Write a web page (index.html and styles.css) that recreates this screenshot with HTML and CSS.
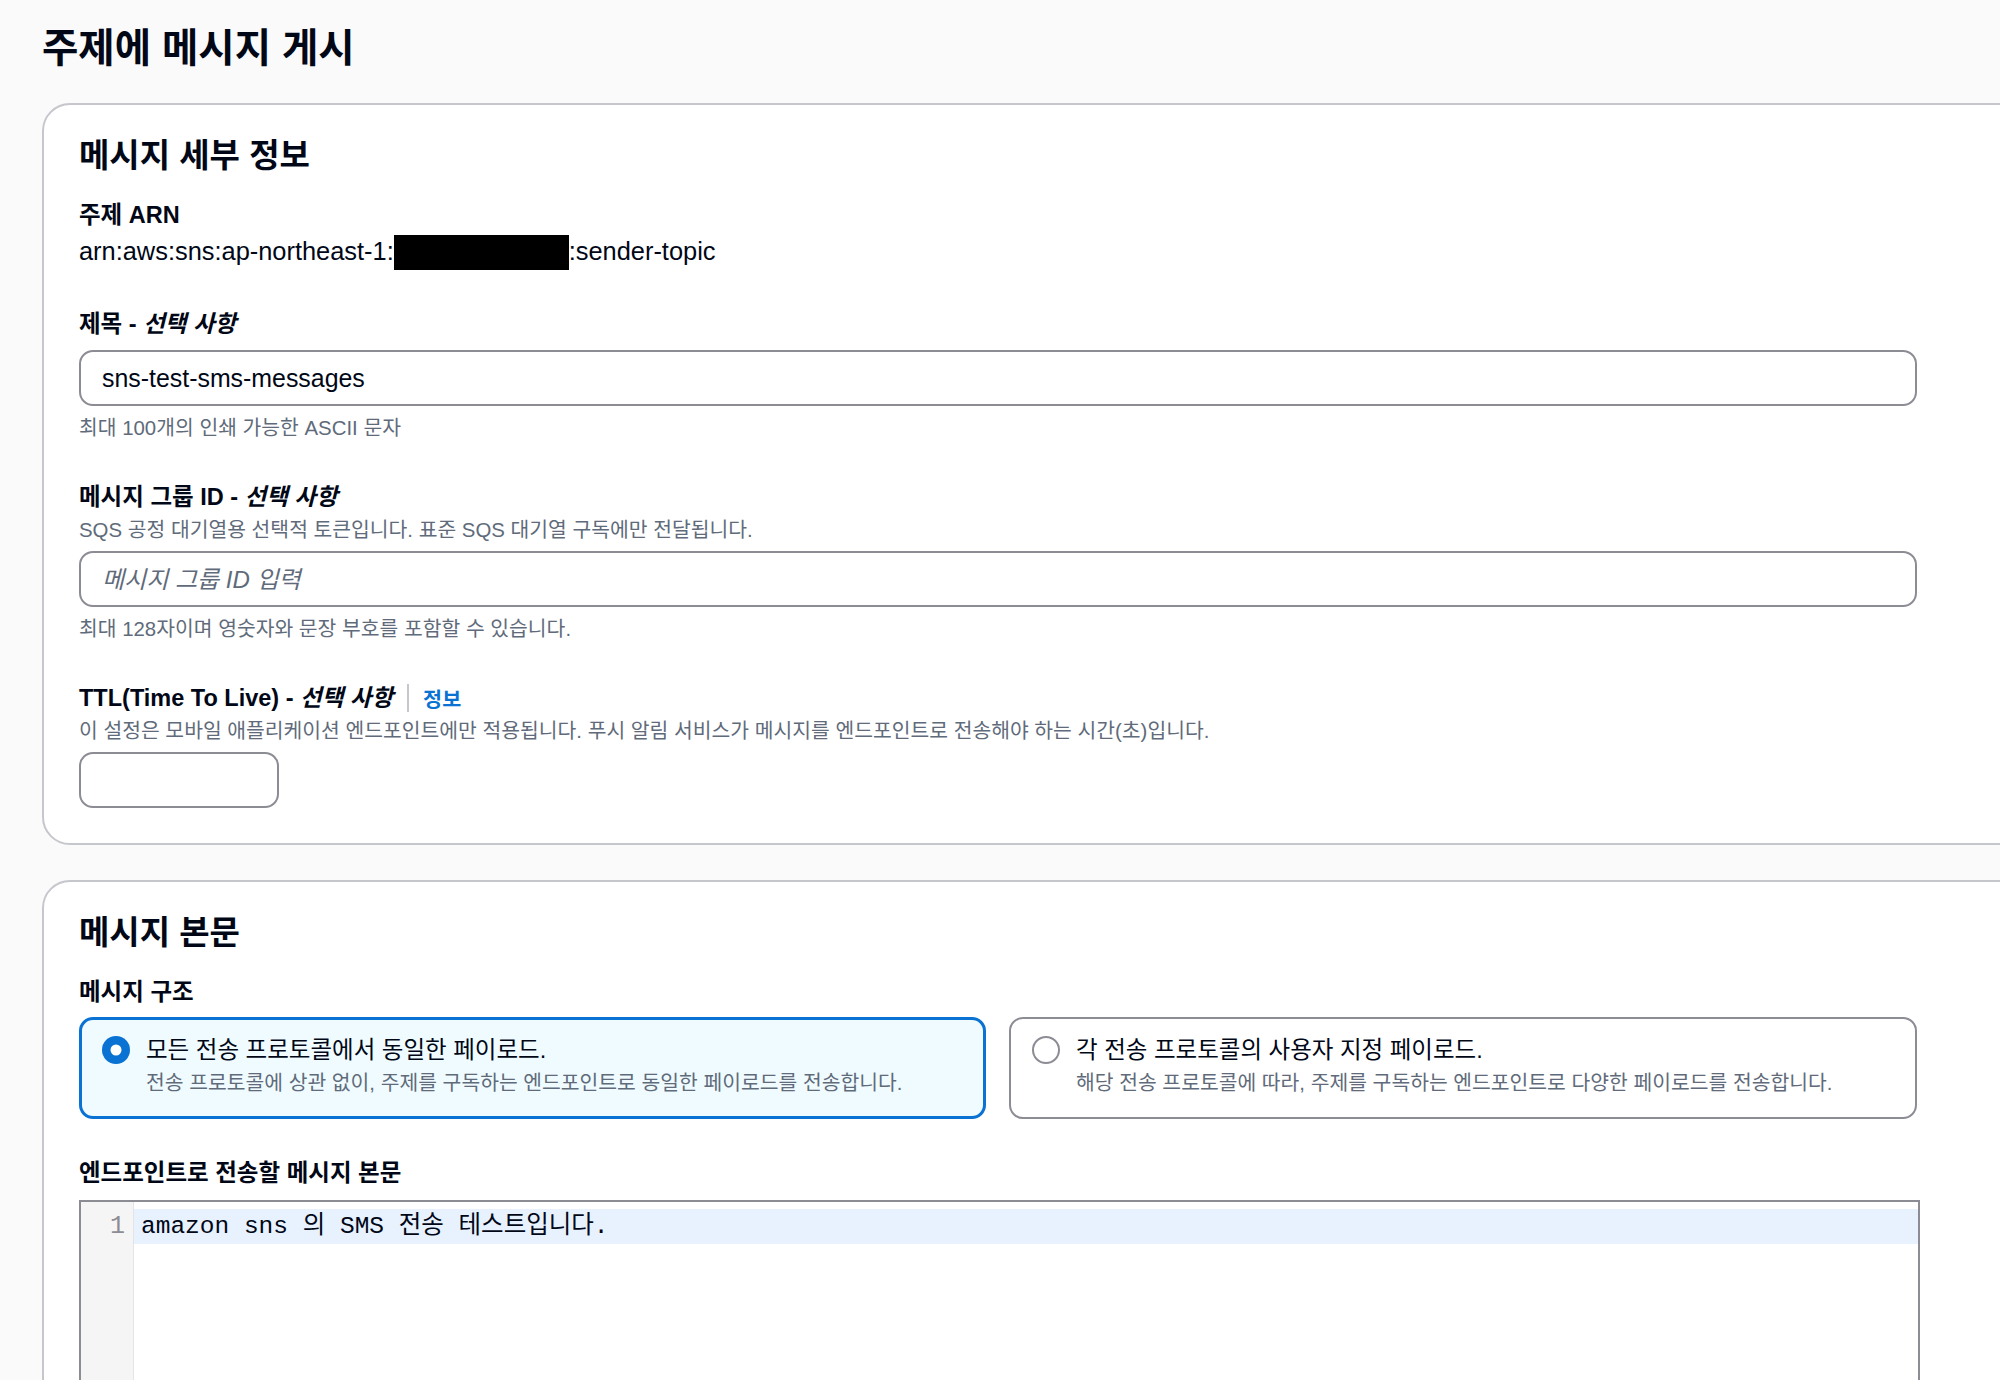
FILE: index.html
```html
<!DOCTYPE html>
<html lang="ko">
<head>
<meta charset="utf-8">
<title>주제에 메시지 게시</title>
<link rel="stylesheet" href="styles.css">
</head>
<body>
<main class="page">
  <h1 class="page-title">주제에 메시지 게시</h1>

  <section class="card">
    <h2 class="card-title">메시지 세부 정보</h2>

    <div class="field">
      <div class="label">주제 ARN</div>
      <div class="value">arn:aws:sns:ap-northeast-1:<span class="redact"></span>:sender-topic</div>
    </div>

    <div class="field">
      <label class="label" for="subject">제목 - <i>선택 사항</i></label>
      <input class="input" id="subject" type="text" value="sns-test-sms-messages">
      <div class="hint">최대 100개의 인쇄 가능한 ASCII 문자</div>
    </div>

    <div class="field">
      <label class="label" for="group">메시지 그룹 ID - <i>선택 사항</i></label>
      <div class="desc">SQS 공정 대기열용 선택적 토큰입니다. 표준 SQS 대기열 구독에만 전달됩니다.</div>
      <input class="input" id="group" type="text" placeholder="메시지 그룹 ID 입력">
      <div class="hint">최대 128자이며 영숫자와 문장 부호를 포함할 수 있습니다.</div>
    </div>

    <div class="field">
      <div class="label-row">
        <label class="label" for="ttl">TTL(Time To Live) - <i>선택 사항</i></label>
        <span class="divider"></span>
        <a class="info" href="#">정보</a>
      </div>
      <div class="desc">이 설정은 모바일 애플리케이션 엔드포인트에만 적용됩니다. 푸시 알림 서비스가 메시지를 엔드포인트로 전송해야 하는 시간(초)입니다.</div>
      <input class="input input-short" id="ttl" type="text">
    </div>
  </section>

  <section class="card">
    <h2 class="card-title">메시지 본문</h2>

    <div class="field">
      <div class="label">메시지 구조</div>
      <div class="tiles">
        <div class="tile tile-selected">
          <svg class="radio" viewBox="0 0 28 28" width="28" height="28"><circle cx="14" cy="14" r="14" fill="#0972d3"/><circle cx="14" cy="14" r="5.5" fill="#ffffff"/></svg>
          <div class="tile-text">
            <div class="tile-label">모든 전송 프로토콜에서 동일한 페이로드.</div>
            <div class="tile-desc">전송 프로토콜에 상관 없이, 주제를 구독하는 엔드포인트로 동일한 페이로드를 전송합니다.</div>
          </div>
        </div>
        <div class="tile">
          <svg class="radio" viewBox="0 0 28 28" width="28" height="28"><circle cx="14" cy="14" r="13" fill="#ffffff" stroke="#8c8c94" stroke-width="2"/></svg>
          <div class="tile-text">
            <div class="tile-label">각 전송 프로토콜의 사용자 지정 페이로드.</div>
            <div class="tile-desc">해당 전송 프로토콜에 따라, 주제를 구독하는 엔드포인트로 다양한 페이로드를 전송합니다.</div>
          </div>
        </div>
      </div>
    </div>

    <div class="field">
      <div class="label">엔드포인트로 전송할 메시지 본문</div>
      <div class="editor">
        <div class="gutter"><div class="ln">1</div></div>
        <div class="code"><div class="code-line active">amazon sns 의 SMS 전송 테스트입니다.</div></div>
      </div>
    </div>
  </section>
</main>
</body>
</html>
```

FILE: styles.css
```css
html, body {
  margin: 0;
  padding: 0;
  background: #fafafa;
  overflow: hidden;
}

body {
  font-family: "Liberation Sans", "Noto Sans CJK KR", sans-serif;
  color: #000716;
}

.page {
  padding: 24px 0 0 42px;
}

.page-title {
  margin: 0 0 31px;
  font-size: 39.5px;
  line-height: 48px;
  font-weight: 700;
  color: #000716;
}

.card {
  background: #ffffff;
  border: 2px solid #c6c6cd;
  border-radius: 28px;
  margin-right: -80px;
  padding: 30px 35px 35px;
  margin-bottom: 35px;
}

.card-title {
  margin: 0 0 20px;
  font-size: 33px;
  line-height: 42px;
  font-weight: 700;
}

.field {
  max-width: 1841px;
}

.field + .field {
  margin-top: 36px;
}

.label {
  display: block;
  font-size: 23.5px;
  line-height: 36px;
  font-weight: 700;
}

.label i {
  font-style: italic;
}

.value {
  font-size: 25.4px;
  line-height: 36px;
}

.redact {
  display: inline-block;
  width: 175px;
  height: 35px;
  background: #000000;
  vertical-align: -10px;
}

.input {
  display: block;
  box-sizing: border-box;
  width: 1838px;
  height: 56px;
  margin-top: 8px;
  padding: 0 21px;
  border: 2px solid #8c8c94;
  border-radius: 14px;
  background: #ffffff;
  font-family: "Liberation Sans", "Noto Sans CJK KR", sans-serif;
  font-size: 24.9px;
  color: #000716;
  outline: none;
}

.input::placeholder {
  font-size: 24px;
  font-style: italic;
  color: #5f6b7a;
}

.input-short {
  width: 200px;
}

.hint {
  margin-top: 7px;
  font-size: 20.4px;
  line-height: 30px;
  color: #5f6b7a;
}

.desc {
  font-size: 20.4px;
  line-height: 30px;
  color: #5f6b7a;
}

.desc + .input {
  margin-top: 6px;
}

.label-row {
  display: flex;
  align-items: center;
}

.divider {
  width: 2px;
  height: 28px;
  background: #c6c6cd;
  margin: 0 14px;
}

.info {
  font-size: 20.7px;
  font-weight: 700;
  color: #0972d3;
  text-decoration: none;
}

.tiles {
  display: grid;
  grid-template-columns: 907px 908px;
  column-gap: 23px;
  margin-top: 7px;
}

.tile {
  display: flex;
  align-items: flex-start;
  gap: 16px;
  box-sizing: border-box;
  height: 102px;
  padding: 13px 21px 0;
  border: 2px solid #8c8c94;
  border-radius: 14px;
  background: #ffffff;
}

.tile-selected {
  padding: 12px 20px 0;
  border: 3px solid #0972d3;
  background: #f0fbff;
}

.radio {
  flex: none;
  margin-top: 4px;
}

.tile-label {
  font-size: 23.5px;
  line-height: 36px;
}

.tile-desc {
  font-size: 20.4px;
  line-height: 30px;
  color: #5f6b7a;
}

.editor {
  display: flex;
  box-sizing: border-box;
  width: 1841px;
  height: 330px;
  margin-top: 9px;
  border: 2px solid #8c8c94;
  background: #ffffff;
}

.gutter {
  flex: none;
  width: 53px;
  box-sizing: border-box;
  padding-top: 7px;
  background: #f5f5f5;
  border-right: 1px solid #e4e4e4;
}

.ln {
  height: 35px;
  line-height: 35px;
  padding-right: 8px;
  text-align: right;
  font-family: "Liberation Mono", "Noto Sans CJK KR", monospace;
  font-size: 25px;
  color: #8c8c94;
}

.code {
  flex: 1;
  padding-top: 7px;
}

.code-line {
  height: 35px;
  line-height: 35px;
  padding-left: 7px;
  font-family: "Liberation Mono", "Noto Sans CJK KR", monospace;
  font-size: 24.5px;
  color: #000716;
  white-space: pre;
}

.code-line.active {
  background: #e8f2ff;
}
```
